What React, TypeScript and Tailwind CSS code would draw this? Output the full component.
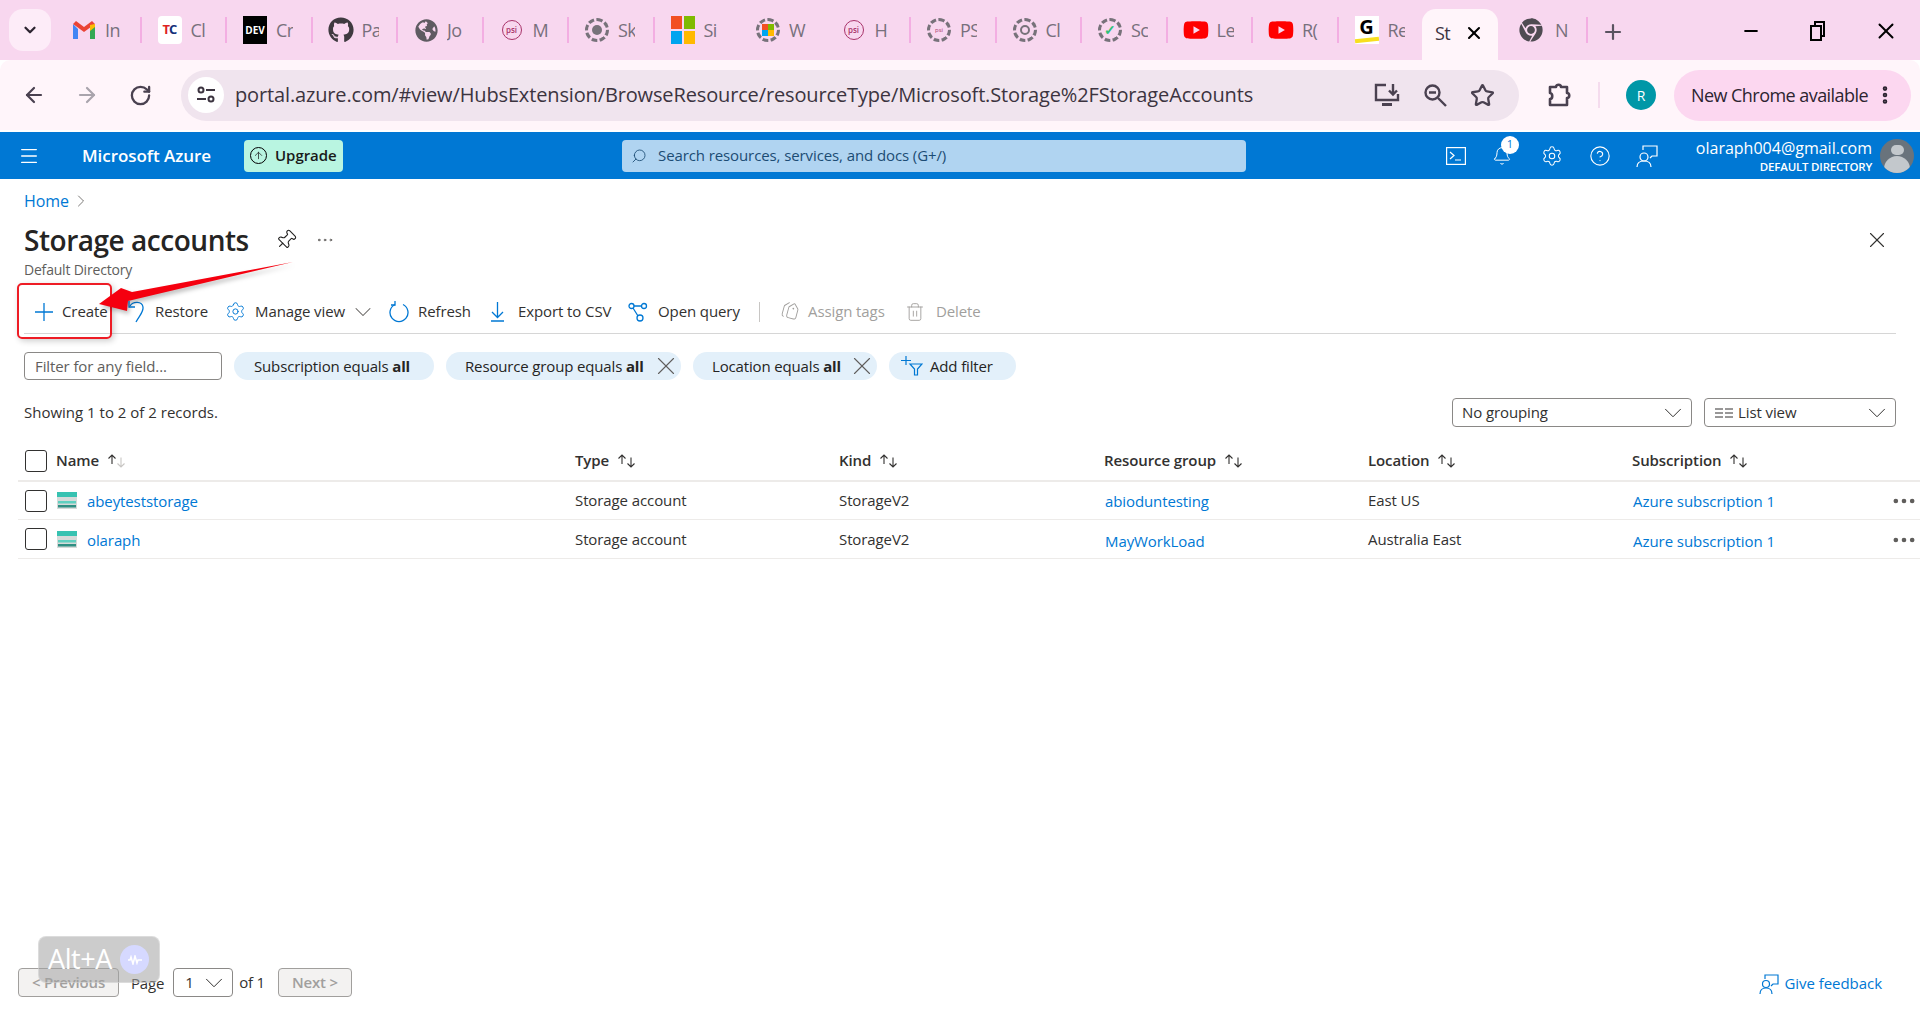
import { ArrowLeft, ArrowRight, ArrowUp, Bell, ChevronDown, ChevronRight, Ellipsis, HelpCircle, Menu, Minus, MoreVertical, Pin, Plus, RotateCw, Search, Settings, Star, Tags, Trash2, X } from "lucide-react";
import { FaChrome, FaGithub, FaGlobeAmericas, FaYoutube } from "react-icons/fa";
import type { ReactNode } from "react";

const font = "font-['Open_Sans','Noto_Sans',sans-serif]";

const Ring = ({ children, color = "#77727a" }: { children?: ReactNode; color?: string }) => (
    <div className="w-6 h-6 rounded-full border-[3px] border-dashed flex items-center justify-center" style={{ borderColor: color }}>
        {children}
    </div>
);

const Psi = () => (
    <div className="w-[20px] h-[20px] rounded-full border border-[#a8336a] flex items-center justify-center text-[8px] leading-none text-[#a8336a] font-semibold">psi</div>
);

const Gmail = () => (
    <svg width="24" height="20" viewBox="0 0 24 20">
        <path d="M1 4v15h5V9z" fill="#4285f4" />
        <path d="M23 4v15h-5V9z" fill="#34a853" />
        <path d="M1 4 12 12 23 4 20 1 12 7 4 1z" fill="#ea4335" />
        <path d="M18 5l5-1v3l-5 4z" fill="#fbbc04" />
    </svg>
);

const Windows = () => (
    <svg width="24" height="28" viewBox="0 0 24 28">
        <rect width="11" height="13" fill="#f25022" />
        <rect x="13" width="11" height="13" fill="#7fba00" />
        <rect y="15" width="11" height="13" fill="#00a4ef" />
        <rect x="13" y="15" width="11" height="13" fill="#ffb900" />
    </svg>
);

const tabs: { icon: ReactNode; label: string; sep?: boolean }[] = [
    { icon: <Gmail />, label: "In", sep: true },
    { icon: <div className="w-6 h-7 bg-white rounded-sm flex items-center justify-center text-[13px] font-bold tracking-[-1px]"><span className="text-[#d22]">T</span><span className="text-[#14307a]">C</span></div>, label: "Cl", sep: true },
    { icon: <div className="w-6 h-7 bg-black text-white flex items-center justify-center text-[10px] font-bold">DEV</div>, label: "Cr", sep: true },
    { icon: <FaGithub className="w-[26px] h-[26px] text-[#3f3a40]" />, label: "Pa", sep: true },
    { icon: <FaGlobeAmericas className="w-[23px] h-[23px] text-[#5f5b62]" />, label: "Jo", sep: true },
    { icon: <Psi />, label: "M", sep: true },
    { icon: <Ring><div className="w-2.5 h-2.5 rounded-full bg-[#77727a]" /></Ring>, label: "Sk", sep: true },
    { icon: <Windows />, label: "Si" },
    { icon: <Ring><div className="grid grid-cols-2 w-3 h-3"><i className="bg-[#f25022]" /><i className="bg-[#7fba00]" /><i className="bg-[#00a4ef]" /><i className="bg-[#ffb900]" /></div></Ring>, label: "W" },
    { icon: <Psi />, label: "H", sep: true },
    { icon: <Ring><span className="text-[6px] text-[#a8336a]">psi</span></Ring>, label: "PS", sep: true },
    { icon: <Ring><div className="w-2.5 h-2.5 rounded-full border-2 border-[#77727a]" /></Ring>, label: "Cl", sep: true },
    { icon: <Ring><span className="text-[14px] font-bold leading-none text-[#2fc27a]">✓</span></Ring>, label: "Sc", sep: true },
    { icon: <FaYoutube className="w-[26px] h-[26px] text-[#f00]" />, label: "Le", sep: true },
    { icon: <FaYoutube className="w-[26px] h-[26px] text-[#f00]" />, label: "R(", sep: true },
    { icon: <div className="w-6 h-7 bg-white flex flex-col items-center justify-start text-[20px] leading-[22px] font-bold text-black"><span>G</span><i className="w-full h-1 bg-[#f7df1e] -rotate-6" /></div>, label: "Re" },
];

const BrowserTab = ({ icon, label, sep }: { icon: ReactNode; label: string; sep?: boolean }) => (
    <div className="w-[85.5px] h-[30px] flex items-center shrink-0 pl-[15px] relative">
        <div className="w-[26px] flex justify-center shrink-0">{icon}</div>
        <span className="ml-[8px] text-[18px] tracking-[-0.5px] text-[#77707c] w-[17px] overflow-hidden whitespace-nowrap">{label}</span>
        {sep && <i className="absolute right-0 top-[2px] w-[2px] h-[26px] bg-[#f3aee2]" />}
    </div>
);

const TabStrip = () => (
    <div className="h-[60px] bg-[#f8d7ef] flex items-start pl-[9px] shrink-0">
        <div className="mt-[9px] w-[42px] h-[42px] rounded-[14px] bg-[#fdecf8] flex items-center justify-center shrink-0">
            <ChevronDown className="w-[18px] h-[18px] text-[#2c2430]" strokeWidth={3} />
        </div>
        <div className="ml-[5px] mt-[15px] flex items-center">
            {tabs.map((t, i) => <BrowserTab key={i} {...t} />)}
        </div>
        <div className="ml-[-2px] mt-[9px] w-[76px] h-[51px] bg-[#fff5fa] rounded-t-[14px] flex items-center pl-[13px] pb-[3px] shrink-0">
            <span className="text-[18px] tracking-[-0.5px] text-[#3c3440]">St</span>
            <X className="ml-[14px] w-[20px] h-[20px] text-black" strokeWidth={2.5} />
        </div>
        <div className="mt-[15px] h-[30px] flex items-center pl-[21px] relative w-[98px] shrink-0">
            <FaChrome className="w-[24px] h-[24px] text-[#4f4b52]" />
            <span className="ml-[12px] text-[18px] w-[14px] overflow-hidden text-[#77707c]">N</span>
            <i className="absolute right-[8px] top-[2px] w-[2px] h-[26px] bg-[#f3aee2]" />
        </div>
        <Plus className="mt-[20px] ml-[5px] w-[24px] h-[24px] text-[#5a5360]" strokeWidth={2.2} />
        <div className="flex-1" />
        <div className="mt-[18px] flex items-center text-black">
            <Minus className="w-[20px] h-[20px]" strokeWidth={2.5} />
            <svg className="ml-[48px]" width="18" height="22" viewBox="0 0 18 22" fill="none" stroke="black" strokeWidth="2">
                <rect x="2" y="6" width="10" height="14" />
                <path d="M6 6V2h9v14h-3" />
            </svg>
            <X className="ml-[46px] mr-[21px] w-[26px] h-[26px]" strokeWidth={1.8} />
        </div>
    </div>
);

const InstallIcon = () => (
    <svg width="26" height="24" viewBox="0 0 26 24" fill="none" stroke="#4a4150" strokeWidth="2.4">
        <path d="M12 2H2v15h22v-6" />
        <path d="M8 21.500h10" strokeWidth="3" />
        <path d="M19 1v10M15 7.500l4 4 4-4" />
    </svg>
);

const MagnifierMinus = () => (
    <svg width="24" height="24" viewBox="0 0 24 24" fill="none" stroke="#4a4150" strokeWidth="2.4">
        <circle cx="9.500" cy="9.500" r="7" />
        <path d="M6 9.500h7M15 15l8 8" />
    </svg>
);

const ExtensionIcon = () => (
    <svg width="26" height="26" viewBox="0 0 26 26" fill="none" stroke="#4a4150" strokeWidth="2.6" strokeLinejoin="round">
        <path d="M3 5h6c0-3 5-3 5 0h6v6c3 0 3 5 0 5v7H3v-6c3 0 3-6 0-6z" />
    </svg>
);

const AddressBar = () => (
    <div className="h-[70px] bg-[#fff5fa] flex items-center shrink-0 rounded-t-[10px] pl-[22px] text-[#4a4150]">
        <ArrowLeft className="w-[24px] h-[24px]" strokeWidth={2.2} />
        <ArrowRight className="ml-[29px] w-[24px] h-[24px] text-[#a9a4ac]" strokeWidth={2.2} />
        <RotateCw className="ml-[30px] w-[23px] h-[23px]" strokeWidth={2.4} />
        <div className="ml-[29px] w-[1338px] h-[51px] bg-[#f0e4ee] rounded-full flex items-center pl-[7px] shrink-0">
            <div className="w-[36px] h-[36px] bg-white rounded-full flex items-center justify-center">
                <svg width="20" height="20" viewBox="0 0 20 20" fill="none" stroke="#3c3440" strokeWidth="2">
                    <circle cx="5" cy="5" r="2.5" />
                    <path d="M10 5h9M1 14h9" />
                    <circle cx="15" cy="14" r="2.5" />
                </svg>
            </div>
            <span className="ml-[11px] text-[20px] tracking-[-0.14px] text-[#3c3440] whitespace-nowrap">portal.azure.com/#view/HubsExtension/BrowseResource/resourceType/Microsoft.Storage%2FStorageAccounts</span>
            <div className="flex-1" />
            <InstallIcon />
            <span className="ml-[23px]"><MagnifierMinus /></span>
            <Star className="ml-[23px] mr-[24px] w-[25px] h-[25px]" strokeWidth={2.2} />
        </div>
        <span className="ml-[28px]"><ExtensionIcon /></span>
        <i className="ml-[25px] w-[2px] h-[26px] bg-[#f5dcee]" />
        <div className="ml-[26px] w-[30px] h-[30px] rounded-full bg-[#0097a7] text-white text-[14px] flex items-center justify-center">R</div>
        <div className="ml-[18px] w-[237px] h-[51px] rounded-full bg-[#fcd7f0] flex items-center pl-[17px] text-[#2c2430]">
            <span className="text-[18px] tracking-[-0.55px] whitespace-nowrap">New Chrome available</span>
            <MoreVertical className="ml-[6px] w-[22px] h-[22px]" strokeWidth={3} />
        </div>
    </div>
);

const AzureBar = () => (
    <div className="h-[47px] mt-[2px] bg-[#0078d4] flex items-center text-white shrink-0">
        <Menu className="ml-[18px] w-[22px] h-[22px]" strokeWidth={1.4} />
        <span className="ml-[42px] w-[132px] text-[17px] font-semibold whitespace-nowrap tracking-[-0.05px]">Microsoft Azure</span>
        <div className="ml-[30px] w-[99px] h-[32px] bg-[#b9f5e1] text-[#1a1a1a] rounded-sm flex items-center pl-[6px] shrink-0">
            <div className="w-[17px] h-[17px] rounded-full border border-black flex items-center justify-center">
                <ArrowUp className="w-[11px] h-[11px]" strokeWidth={1.6} />
            </div>
            <span className="ml-[8px] text-[15px] font-semibold tracking-[-0.05px]">Upgrade</span>
        </div>
        <div className="ml-[279px] w-[624px] h-[32px] bg-[#b0d4f1] rounded-sm flex items-center pl-[9px] text-[#1c4c74] shrink-0">
            <Search className="w-[16px] h-[16px] -scale-x-100" strokeWidth={1.3} />
            <span className="ml-[11px] text-[15px] tracking-[-0.1px]">Search resources, services, and docs (G+/)</span>
        </div>
        <svg className="ml-[200px] shrink-0" width="20" height="18" viewBox="0 0 20 18" fill="none" stroke="white" strokeWidth="1.2">
            <rect x="0.600" y="0.600" width="18.800" height="16.800" />
            <path d="M4 5l4 3.500L4 12M9 13h6" />
        </svg>
        <div className="ml-[26px] relative w-[22px] shrink-0">
            <Bell className="w-[20px] h-[20px]" strokeWidth={1.2} />
            <div className="absolute -top-[10px] left-[9px] w-[18px] h-[18px] rounded-full bg-white text-[#0078d4] text-[11px] flex items-center justify-center">1</div>
        </div>
        <Settings className="ml-[27px] w-[22px] h-[22px] shrink-0" strokeWidth={1.1} />
        <HelpCircle className="ml-[26px] w-[22px] h-[22px] shrink-0" strokeWidth={1.2} />
        <svg className="ml-[25px] shrink-0" width="22" height="24" viewBox="0 0 22 24" fill="none" stroke="white" strokeWidth="1.2">
            <path d="M7 6V2h14v10h-5l-2 2" />
            <circle cx="8" cy="13" r="4" />
            <path d="M1 23c0-5 3-6 7-6s7 1 7 6" />
        </svg>
        <div className="flex-1 flex flex-col items-end pr-[8px] whitespace-nowrap">
            <span className="text-[16px] leading-[18px] tracking-[0px]">olaraph004@gmail.com</span>
            <span className="mt-[1px] translate-y-[2px] text-[11.5px] leading-[14px] font-semibold tracking-[-0.2px]">DEFAULT DIRECTORY</span>
        </div>
        <div className="w-[34px] h-[34px] rounded-full bg-[#69737c] mr-[6px] overflow-hidden flex flex-col items-center shrink-0">
            <i className="mt-[6px] w-[13px] h-[13px] rounded-full bg-[#c3c8cc]" />
            <i className="mt-[1px] w-[26px] h-[20px] rounded-t-full bg-[#c3c8cc]" />
        </div>
    </div>
);

const CmdButton = ({ icon, label, className, gap, disabled }: { icon: ReactNode; label: string; className: string; gap: string; disabled?: boolean }) => (
    <div className={`flex items-center whitespace-nowrap ${disabled ? "text-[#a19f9d]" : "text-[#323130]"} ${className}`}>
        {icon}
        <span className={gap}>{label}</span>
    </div>
);

const CommandBar = () => (
    <div className="mt-[13px] h-[43px] border-b border-[#d6d6d6] flex items-center pb-[1px] text-[15px] tracking-[-0.1px]">
        <CmdButton
            className="ml-[10px] w-[94px]"
            gap="ml-[8px]"
            icon={
                <svg width="20" height="20" viewBox="0 0 20 20" fill="none" stroke="#0078d4" strokeWidth="1.3">
                    <path d="M10 1v18M1 10h18" />
                </svg>
            }
            label="Create"
        />
        <CmdButton
            className="w-[97px]"
            gap="ml-[9px]"
            icon={
                <svg width="18" height="24" viewBox="0 0 18 24" fill="none" stroke="#0078d4" strokeWidth="1.3">
                    <path d="M2 6c3-5 12-5 13 1 .8 5-4 9-7 15" />
                    <path d="M1 1v6h6" />
                </svg>
            }
            label="Restore"
        />
        <CmdButton className="w-[137px]" gap="ml-[9px]" icon={<Settings className="w-[21px] h-[21px] text-[#0078d4]" strokeWidth={1.1} />} label="Manage view" />
        <ChevronDown className="-ml-[13px] w-[28px] h-[28px] text-[#605e5c]" strokeWidth={0.9} />
        <CmdButton
            className="ml-[12px] w-[102px]"
            gap="ml-[9px]"
            icon={
                <svg width="20" height="22" viewBox="0 0 20 22" fill="none" stroke="#0078d4" strokeWidth="1.3">
                    <path d="M6 3.5a9 9 0 1 0 8 0" />
                    <path d="M6 0v4H2" />
                </svg>
            }
            label="Refresh"
        />
        <CmdButton
            className="w-[137px]"
            gap="ml-[14px]"
            icon={
                <svg width="13" height="20" viewBox="0 0 13 20" fill="none" stroke="#0078d4" strokeWidth="1.3">
                    <path d="M6.500 0v15M1 10l5.500 5.500L12 10M0 19h13" />
                </svg>
            }
            label="Export to CSV"
        />
        <CmdButton
            className="w-[131px]"
            gap="ml-[10px]"
            icon={
                <svg width="20" height="20" viewBox="0 0 20 20" fill="none" stroke="#0078d4" strokeWidth="1.3">
                    <circle cx="3.5" cy="4" r="2.5" />
                    <circle cx="16" cy="4" r="2.5" />
                    <circle cx="12" cy="16" r="3" />
                    <path d="M6 4h7.5M5 6l5 8" />
                </svg>
            }
            label="Open query"
        />
        <i className="w-px h-[20px] bg-[#c8c6c4]" />
        <CmdButton disabled className="ml-[20px] w-[125px]" gap="ml-[8px]" icon={<Tags className="w-[20px] h-[20px] rotate-[60deg]" strokeWidth={1.1} />} label="Assign tags" />
        <CmdButton disabled gap="ml-[11px]" className="" icon={<Trash2 className="w-[20px] h-[20px]" strokeWidth={1.1} />} label="Delete" />
    </div>
);

const Pill = ({ children, className }: { children: ReactNode; className: string }) => (
    <div className={`h-[28px] rounded-full bg-[#e3f0fa] flex items-center text-[15px] tracking-[-0.15px] text-[#252423] whitespace-nowrap ${className}`}>{children}</div>
);

const FilterRow = () => (
    <div className="mt-[18px] flex items-center">
        <div className="w-[198px] h-[28px] border border-[#8a8886] rounded-sm flex items-center pl-[10px] text-[15px] tracking-[-0.1px] text-[#605e5c]">Filter for any field...</div>
        <Pill className="ml-[12px] w-[200px] pl-[20px]"><span>Subscription equals <b className="font-bold">all</b></span></Pill>
        <Pill className="ml-[12px] w-[235px] pl-[19px]">
            <span>Resource group equals <b className="font-bold">all</b></span>
            <X className="ml-auto mr-[0px] w-[30px] h-[30px] text-[#605e5c]" strokeWidth={0.9} />
        </Pill>
        <Pill className="ml-[12px] w-[184px] pl-[19px]">
            <span>Location equals <b className="font-bold">all</b></span>
            <X className="ml-auto mr-[0px] w-[30px] h-[30px] text-[#605e5c]" strokeWidth={0.9} />
        </Pill>
        <Pill className="ml-[12px] w-[127px] pl-[12px]">
            <svg width="22" height="20" viewBox="0 0 22 20" fill="none" stroke="#0078d4" strokeWidth="1.2">
                <path d="M5 0v9M0 4.5h10" />
                <path d="M9 8h12l-4.5 5v6h-3v-6z" />
            </svg>
            <span className="ml-[7px]">Add filter</span>
        </Pill>
    </div>
);

const Select = ({ children, className }: { children: ReactNode; className: string }) => (
    <div className={`h-[29px] border border-[#8a8886] rounded-sm flex items-center text-[15px] tracking-[-0.1px] text-[#323130] ${className}`}>
        {children}
        <ChevronDown className="ml-auto mr-[3px] w-[30px] h-[30px] text-[#323130]" strokeWidth={0.8} />
    </div>
);

const SortIcon = ({ dim }: { dim?: boolean }) => (
    <svg className="ml-[8px] shrink-0" width="19" height="14" viewBox="0 0 19 14" fill="none" stroke="#323130" strokeWidth="1.1">
        <path d="M5 10V1M1.500 4.500 5 1l3.500 3.500" />
        <path d="M14 3.500V13M10.500 9.500 14 13l3.500-3.500" stroke={dim ? "#c8c6c4" : "#323130"} />
    </svg>
);

const StorageIcon = () => (
    <svg width="20" height="17" viewBox="0 0 20 17" className="shrink-0">
        <rect width="20" height="17" fill="#d6dad9" />
        <rect width="20" height="5" fill="#37c2b1" />
        <rect x="1" y="9" width="18" height="2.5" fill="#5fd0c0" />
        <rect x="1" y="13" width="18" height="2.5" fill="#2f8f83" />
    </svg>
);

const Check = () => <div className="w-[22px] h-[22px] border border-[#323130] rounded-[3px] shrink-0" />;

const cols = "grid grid-cols-[550px_264px_265px_264px_264px_1fr] items-center";

const rows = [
    { name: "abeyteststorage", group: "abioduntesting", location: "East US", linkShift: "translate-y-[1px]" },
    { name: "olaraph", group: "MayWorkLoad", location: "Australia East", linkShift: "translate-y-[2px]" },
];

const Table = () => (
    <div className="text-[15px] tracking-[-0.1px] text-[#323130] -ml-[6px] -mr-[24px]">
        <div className={`${cols} h-[55px] pt-[14px] border-b-2 border-[#edebe9] font-semibold pl-[7px]`}>
            <div className="flex items-center"><Check /><span className="ml-[9px]">Name</span><SortIcon dim /></div>
            {["Type", "Kind", "Resource group", "Location", "Subscription"].map((h) => (
                <div key={h} className="flex items-center"><span>{h}</span><SortIcon /></div>
            ))}
        </div>
        {rows.map((r, i) => (
            <div key={r.name} className={`${cols} ${i === 0 ? "h-[38px]" : "h-[39px]"} border-b border-[#edebe9] pl-[7px]`}>
                <div className="flex items-center">
                    <Check />
                    <span className="ml-[10px]"><StorageIcon /></span>
                    <span className="ml-[10px] text-[#0078d4] translate-y-[1px]">{r.name}</span>
                </div>
                <span>Storage account</span>
                <span>StorageV2</span>
                <span className={`ml-[1px] text-[#0078d4] ${r.linkShift}`}>{r.group}</span>
                <span>{r.location}</span>
                <div className={`flex items-center text-[#0078d4] pr-[2px] ${r.linkShift}`}>
                    <span className="ml-[1px] tracking-[-0.05px]">Azure subscription 1</span>
                    <Ellipsis className="ml-auto -translate-y-[1px] w-[28px] h-[28px] text-[#605e5c]" strokeWidth={2} />
                </div>
            </div>
        ))}
    </div>
);

const PagerButton = ({ label, className }: { label: string; className: string }) => (
    <div className={`h-[29px] bg-[#f3f2f1] border border-[#a19f9d] rounded-sm flex items-center justify-center text-[15px] font-semibold text-[#a19f9d] tracking-[-0.2px] ${className}`}>{label}</div>
);

const Footer = () => (
    <div className="mt-auto mb-[23px] flex items-center relative pl-[18px] pr-[38px] text-[15px] text-[#323130] tracking-[-0.2px]">
        <PagerButton className="w-[101px]" label="< Previous" />
        <span className="ml-[12px] translate-y-[1px]">Page</span>
        <div className="ml-[9px] w-[60px] h-[29px] border border-[#8a8886] rounded-sm flex items-center pl-[11px]">
            1
            <ChevronDown className="ml-auto mr-[3px] w-[30px] h-[30px]" strokeWidth={0.8} />
        </div>
        <span className="ml-[6px]">of 1</span>
        <PagerButton className="ml-[13px] w-[74px]" label="Next >" />
        <div className="ml-auto flex items-center text-[#0078d4] translate-y-[1px]">
            <svg width="20" height="20" viewBox="0 0 20 20" fill="none" stroke="#0078d4" strokeWidth="1.2">
                <path d="M6 5V1h13v9h-5l-2 2" />
                <circle cx="7" cy="10" r="3.5" />
                <path d="M1 20c0-4 2.500-6 6-6s6 2 6 6" />
            </svg>
            <span className="ml-[5px] tracking-[-0.05px]">Give feedback</span>
        </div>
        {/* Alt+A hint floating over the pager */}
        <div className="absolute left-[38px] bottom-[14px] w-[122px] h-[47px] rounded-[8px] bg-[#a3a3a3]/55 border border-white/30 flex items-center pl-[9px] text-white">
            <span className="text-[27px] tracking-[-0.4px]">Alt+A</span>
            <div className="ml-[8px] w-[29px] h-[29px] rounded-full bg-[#d6d9ff] flex items-center justify-center">
                <svg width="16" height="10" viewBox="0 0 16 10" fill="none" stroke="white" strokeWidth="1.5"><path d="M1 5h2l1-3 2 7 2-8 2 7 1-3h4" /></svg>
            </div>
        </div>
    </div>
);

// red annotation drawn on top of the screenshot
const Annotation = () => (
    <>
        <div className="absolute left-[17px] top-[283px] w-[95px] h-[56px] border-2 border-[#ee1c25] rounded-[5px] shadow-[2px_2px_6px_rgba(0,0,0,0.2)]" />
        <svg className="absolute left-0 top-0 pointer-events-none drop-shadow-[2px_3px_2px_rgba(0,0,0,0.25)]" width="320" height="340" viewBox="0 0 320 340">
            <polygon points="293,262 132,292 121,288 99,304 127,311 128,301" fill="#f5000f" />
        </svg>
    </>
);

export default function App() {
    return (
        <div className={`w-[1920px] h-[1020px] bg-white relative flex flex-col overflow-hidden ${font}`}>
            <TabStrip />
            <AddressBar />
            <AzureBar />
            <div className="px-[24px] flex flex-col">
                <div className="mt-[11px] h-[22px] flex items-center text-[16px] tracking-[-0.1px]">
                    <span className="text-[#0078d4]">Home</span>
                    <ChevronRight className="ml-[2px] w-[20px] h-[20px] text-[#605e5c]" strokeWidth={1} />
                </div>
                <div className="mt-[10px] h-[36px] flex items-center text-[#252423]">
                    <h1 className="text-[28px] font-semibold tracking-[-0.47px] whitespace-nowrap">Storage accounts</h1>
                    <Pin className="ml-[26px] w-[22px] h-[22px] rotate-45" strokeWidth={1.2} />
                    <Ellipsis className="ml-[18px] w-[20px] h-[20px] text-[#605e5c]" strokeWidth={1.2} />
                    <X className="ml-auto mr-[6px] w-[26px] h-[26px] text-[#323130]" strokeWidth={1} />
                </div>
                <div className="mt-[3px] h-[16px] flex items-center text-[14px] tracking-[-0.2px] text-[#605e5c]">Default Directory</div>
                <div className="mt-[1px]"><CommandBar /></div>
                <FilterRow />
                <div className="mt-[18px] h-[29px] flex items-center text-[15px] tracking-[0px] text-[#323130]">
                    <span>Showing 1 to 2 of 2 records.</span>
                    <Select className="ml-auto w-[240px] pl-[9px]">No grouping</Select>
                    <Select className="ml-[12px] w-[192px] pl-[10px]">
                        <svg width="18" height="10" viewBox="0 0 18 10" stroke="#323130" strokeWidth="1" fill="none"><path d="M0 1h8M10 1h8M0 5h8M10 5h8M0 9h8M10 9h8" /></svg>
                        <span className="ml-[5px]">List view</span>
                    </Select>
                </div>
                <Table />
            </div>
            <Footer />
            <Annotation />
        </div>
    );
}
